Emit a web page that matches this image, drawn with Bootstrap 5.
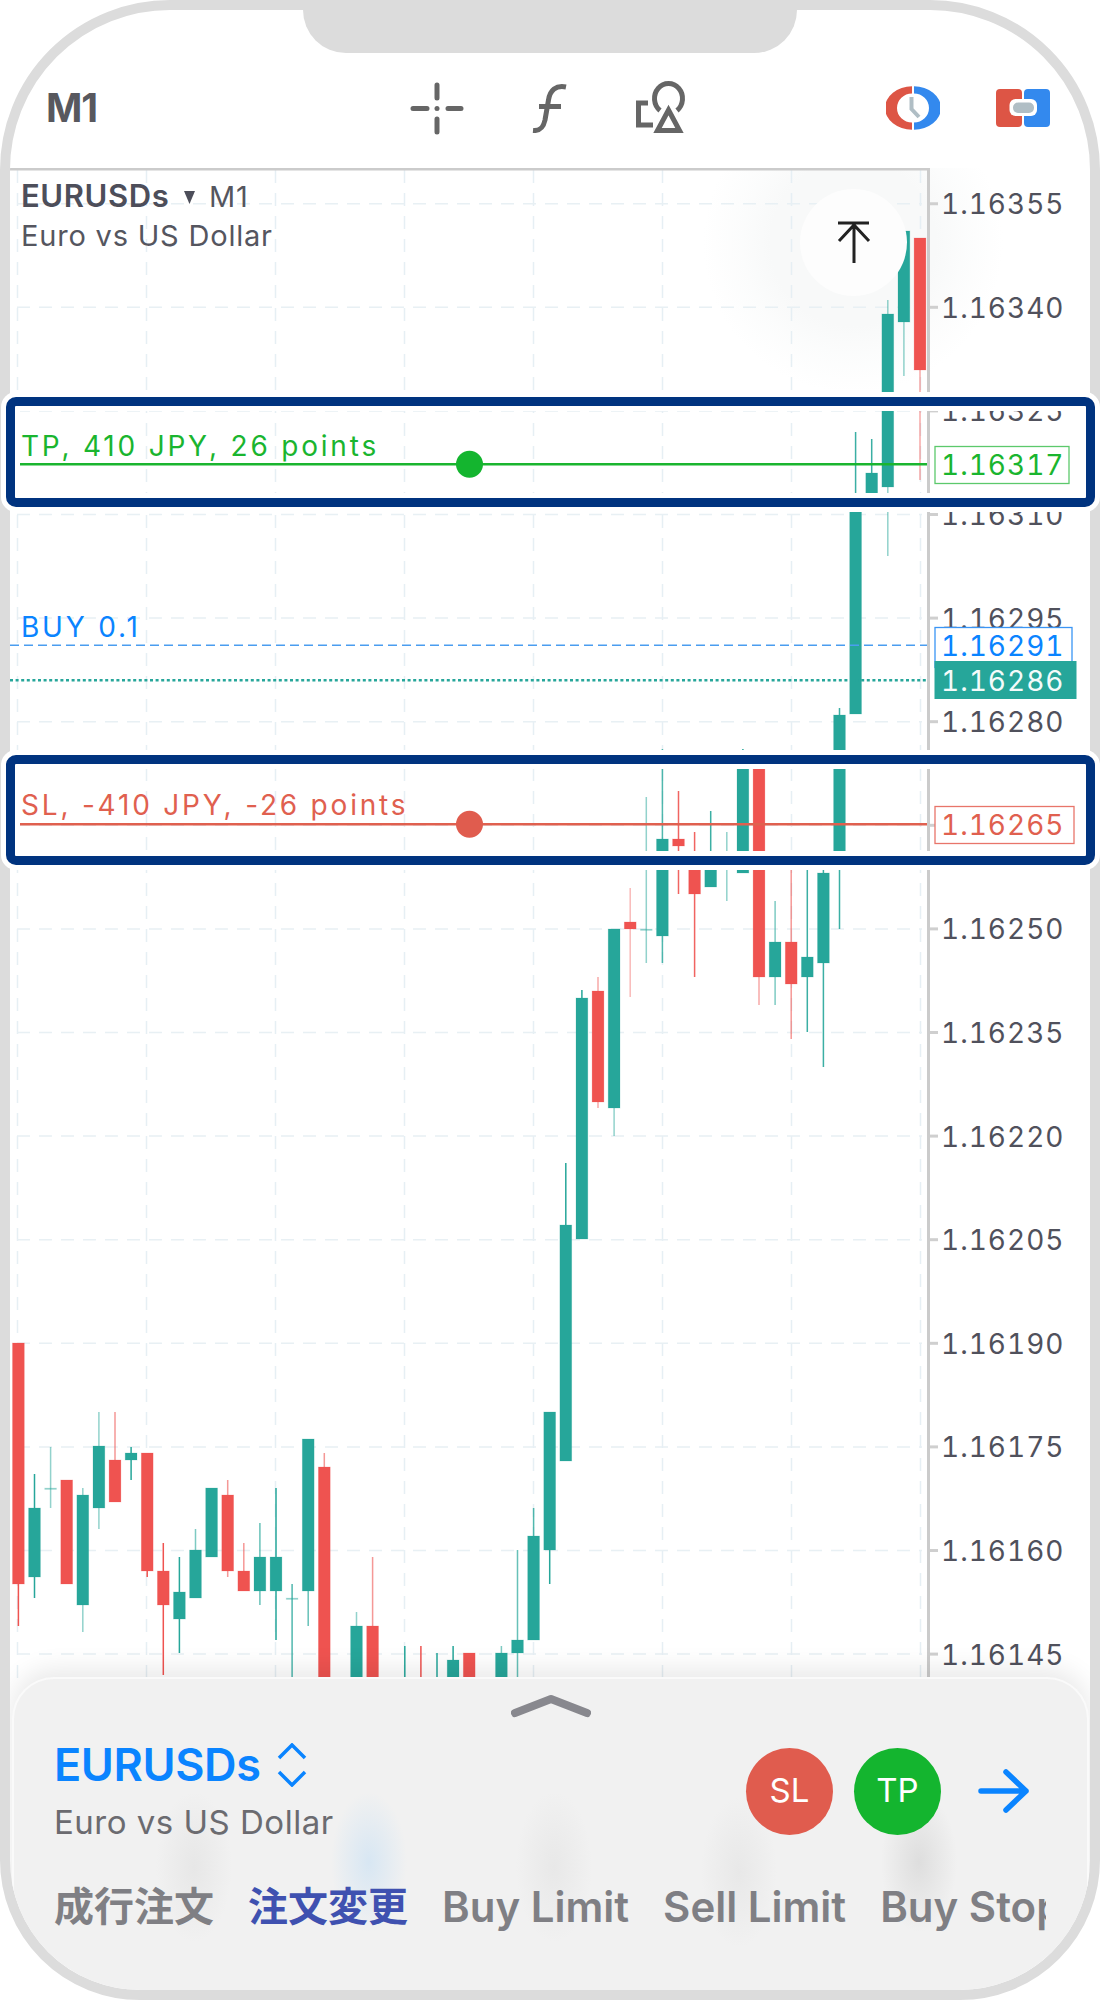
<!DOCTYPE html>
<html>
<head>
  <meta charset="utf-8">
  <meta name="viewport" content="width=device-width, initial-scale=1">
  <link href="https://cdn.jsdelivr.net/npm/bootstrap@5.3.3/dist/css/bootstrap.min.css" rel="stylesheet">
  <script src="https://cdn.jsdelivr.net/npm/bootstrap@5.3.3/dist/js/bootstrap.bundle.min.js"></script>
  <style>
    body { margin: 0; background: #fff; font-family: Inter, "Noto Sans CJK JP", sans-serif; }
    .phone-shell { width: 1100px; height: 2000px; }
    .phone-frame { width: 1100px; height: 2000px; border: 10px solid #dcdcdc; border-radius: 170px 170px 140px 140px; overflow: hidden; background: #fff; }
    .notch { width: 494px; height: 43px; background: #dcdcdc; border-radius: 0 0 48px 48px; z-index: 5; }
    .top-bar { height: 158px; padding: 38px 40px 0 36px; }
    .tf-label { width: 364px; font-size: 39px; font-weight: 700; color: #58585e; letter-spacing: -1px; }
    .tool-group { gap: 68px; }
    .side-group { gap: 56px; }
    .chart-area { height: 1822px; }
    .chart-svg { display: block; background: radial-gradient(circle 150px at 843px 75px, #f8f9f9 55%, rgba(250,251,251,.7) 75%, transparent); }
    .px-label { font: 400 28px Inter, sans-serif; font-variant-numeric: tabular-nums; letter-spacing: 1px; fill: #50515c; }
    .level-text { font: 400 28px Inter, sans-serif; letter-spacing: 2.8px; }
    .sym-bold { font: 600 31px Inter, sans-serif; fill: #4d4e5a; letter-spacing: .6px; }
    .sym-thin { font: 400 29px Inter, sans-serif; fill: #55565f; letter-spacing: .8px; }
    .hl-box { left: 6px; width: 1089px; height: 110px; border: 9px solid #00337f; border-radius: 10px; box-shadow: 0 0 0 5px #fff, inset 0 0 0 5px #fff; z-index: 6; }
    .hl-tp { top: 397px; }
    .hl-sl { top: 755px; }
    .top-btn { width: 107px; height: 107px; top: 21px; left: 790px; background: #fdfdfd; border: 0; padding: 0; }
    .top-btn:hover { background: #fdfdfd; }
    .order-panel { left: 2px; right: 1px; height: 313px; border: 2px solid #fafafa; border-bottom: 0; border-radius: 42px 42px 0 0; box-shadow: 0 -8px 26px rgba(0,0,0,.09);
      background:
        radial-gradient(ellipse 38px 75px at 180px 188px, rgba(205,205,205,.28), transparent),
        radial-gradient(ellipse 38px 70px at 355px 183px, rgba(190,220,245,.5), transparent),
        radial-gradient(ellipse 38px 75px at 540px 188px, rgba(205,205,205,.25), transparent),
        radial-gradient(ellipse 38px 75px at 725px 193px, rgba(205,205,205,.25), transparent),
        radial-gradient(ellipse 38px 70px at 905px 183px, rgba(195,195,195,.42), transparent),
        #f1f1f1; }
    .panel-grab { padding-top: 15px; }
    .panel-body { padding: 22px 0 0 40px; }
    .sym-name { font-size: 45px; line-height: 50px; font-weight: 600; color: #0a84ff; letter-spacing: -.4px; }
    .sym-desc { font-size: 33px; line-height: 40px; color: #6b6b70; margin-top: 12px; letter-spacing: .5px; }
    .round-act { width: 87px; height: 87px; font-size: 33px; color: #fff; }
    .act-sl { background: #e05c4e; }
    .act-tp { background: #14b52f; }
    .act-group { gap: 21px; padding-right: 57px; }
    .tab-strip { margin-top: 40px; gap: 34px; width: 992px; white-space: nowrap; font-size: 40px; line-height: 50px; font-weight: 600; color: #7f7f84; }
    .tab-latin { font-size: 42px; }
    .tab-now { color: #3f51b0; }
  </style>
</head>
<body>
  <div class="phone-shell position-relative">
    <div class="phone-frame position-relative d-flex flex-column">
      <div class="notch position-absolute top-0 start-50 translate-middle-x"></div>

      <div class="top-bar d-flex align-items-center">
        <div class="tf-label">M1</div>
        <div class="tool-group d-flex align-items-center">
          <svg width="54" height="53" viewBox="410 81 54 53" fill="none" stroke="#666" stroke-width="5" stroke-linecap="round">
            <path d="M437 84V97M437 118V131M413 107.5H427M448 107.5H461"/>
            <circle cx="437" cy="107.5" r="2.5" fill="#666" stroke="none"/>
          </svg>
          <svg width="35" height="49" viewBox="532 84 35 49" fill="none" stroke="#666" stroke-width="5">
            <path d="M566 87C556 85 550 90 548.5 100L545 120C543 129 539 131 533 130.5"/>
            <path d="M539 106.5H561"/>
          </svg>
          <svg width="51" height="54" viewBox="636 80 51 54" fill="none" stroke="#666" stroke-width="5">
            <path d="M649 102H639.5V124H654"/>
            <path d="M661 109.5A14 15 0 1 1 678 109.5"/>
            <path d="M669.5 109L680.5 129.5H658.5Z"/>
          </svg>
        </div>
        <div class="side-group d-flex align-items-center ms-auto">
          <svg width="54" height="44" viewBox="886 86 54 44">
            <path fill="#dd5545" d="M912 86.3A27 21.7 0 0 0 912 129.7V122.5A15 14.5 0 0 1 912 93.5Z"/>
            <path fill="#3389ee" d="M914 86.3A27 21.7 0 0 1 914 129.7V122.5A15 14.5 0 0 0 914 93.5Z"/>
            <path fill="none" stroke="#b0bec5" stroke-width="4" d="M911.5 97V109L919 117"/>
          </svg>
          <svg width="54" height="38" viewBox="996 89 54 38">
            <rect x="996" y="89" width="26" height="38" rx="4" fill="#dd5545"/>
            <rect x="1024" y="89" width="26" height="38" rx="4" fill="#3389ee"/>
            <rect x="1009.5" y="99" width="27.5" height="17" rx="6" fill="#fff"/>
            <rect x="1013" y="102.5" width="21" height="10.5" rx="5" fill="#b0bec5"/>
          </svg>
        </div>
      </div>

      <div class="chart-area position-relative">
        <svg id="chart" class="chart-svg" width="1080" height="1822" viewBox="10 168 1080 1822"></svg>

        <button class="top-btn btn rounded-circle position-absolute" type="button">
          <svg width="34" height="44" viewBox="836 221 34 44" fill="none" stroke="#222" stroke-width="3">
            <path d="M837 223H868M853 225V263M838 241L853 225L868 241"/>
          </svg>
        </button>

        <div class="order-panel position-absolute bottom-0">
          <div class="panel-grab d-flex justify-content-center">
            <svg width="80" height="24" viewBox="0 0 80 24" fill="none" stroke="#88888e" stroke-width="8" stroke-linecap="round" stroke-linejoin="round">
              <path d="M4 19L40 5L76 19"/>
            </svg>
          </div>
          <div class="panel-body">
            <div class="d-flex align-items-center justify-content-between">
              <div>
                <div class="sym-name d-flex align-items-center gap-3">
                  <span>EURUSDs</span>
                  <svg width="30" height="44" viewBox="0 0 30 44" fill="none" stroke="#0a84ff" stroke-width="3.5">
                    <path d="M2 15L15 2L28 15M2 29L15 42L28 29"/>
                  </svg>
                </div>
                <div class="sym-desc">Euro vs US Dollar</div>
              </div>
              <div class="act-group d-flex align-items-center">
                <div class="round-act act-sl rounded-circle d-flex align-items-center justify-content-center">SL</div>
                <div class="round-act act-tp rounded-circle d-flex align-items-center justify-content-center">TP</div>
                <svg class="ms-3" width="52" height="44" viewBox="0 0 52 44" fill="none" stroke="#0a84ff" stroke-width="5.5" stroke-linecap="round" stroke-linejoin="round">
                  <path d="M3 22H48M28 3L48 22L28 41"/>
                </svg>
              </div>
            </div>
            <div class="tab-strip d-flex overflow-hidden">
              <span class="flex-shrink-0">成行注文</span>
              <span class="flex-shrink-0 tab-now">注文変更</span>
              <span class="flex-shrink-0 tab-latin">Buy Limit</span>
              <span class="flex-shrink-0 tab-latin">Sell Limit</span>
              <span class="flex-shrink-0 tab-latin">Buy Stop</span>
            </div>
          </div>
        </div>
      </div>
    </div>

    <div class="hl-box hl-tp position-absolute"></div>
    <div class="hl-box hl-sl position-absolute"></div>
  </div>

  <script>
    var GREEN = "#26a69a", RED = "#ef5350";
    // i, colour, body top, body bottom, wick top, wick bottom, wick opacity
    var candles = [
      [0,RED,1343,1584,1343,1626,1],[1,GREEN,1508,1577,1474,1598,1],[2,GREEN,1488,1489,1447,1508,.5],
      [3,RED,1480,1584,1480,1584,1],[4,GREEN,1495,1605,1488,1632,.5],[5,GREEN,1446,1508,1412,1529,.5],
      [6,RED,1460,1502,1412,1502,.6],[7,GREEN,1453,1460,1447,1480,1],[8,RED,1453,1571,1453,1577,1],
      [9,RED,1571,1605,1543,1675,1],[10,GREEN,1592,1619,1557,1653,1],[11,GREEN,1550,1598,1529,1598,.6],
      [12,GREEN,1488,1557,1488,1557,1],[13,RED,1495,1571,1480,1577,.6],[14,RED,1571,1591,1543,1591,.6],
      [15,GREEN,1557,1591,1523,1605,.7],[16,GREEN,1557,1591,1488,1640,1],[17,GREEN,1598,1599,1584,1680,.8],
      [18,GREEN,1439,1591,1439,1626,.7],[19,RED,1467,1700,1453,1700,.6],[21,GREEN,1626,1700,1612,1700,.5],
      [22,RED,1626,1700,1557,1700,.6],[24,GREEN,1680,1700,1646,1700,1],[25,RED,1680,1700,1646,1700,1],
      [26,GREEN,1680,1700,1653,1700,1],[27,GREEN,1660,1700,1646,1700,1],[28,RED,1653,1700,1653,1700,1],
      [30,GREEN,1653,1700,1646,1700,.6],[31,GREEN,1640,1653,1550,1700,.7],[32,GREEN,1536,1640,1508,1536,.8],
      [33,GREEN,1412,1550,1412,1584,1],[34,GREEN,1225,1461,1163,1461,1],[35,GREEN,998,1239,990,1239,1],
      [36,RED,991,1102,977,1108,.5],[37,GREEN,929,1108,929,1136,.5],[38,RED,922,929,888,997,.4],
      [39,GREEN,929,930,797,963,.5],[40,GREEN,839,936,749,963,.8],[41,RED,839,846,791,894,.9],
      [42,RED,859,894,832,977,.9],[43,GREEN,859,887,811,887,.9],[44,GREEN,866,867,832,901,.5],
      [45,GREEN,766,873,749,873,1],[46,RED,766,977,766,1005,.5],[47,GREEN,942,977,901,1005,.6],
      [48,RED,942,984,866,1039,.6],[49,GREEN,957,977,866,1032,.9],[50,GREEN,873,963,866,1067,.9],
      [51,GREEN,715,859,708,929,.9],[52,GREEN,500,714,432,714,.9],[53,GREEN,473,500,439,500,.9],
      [54,GREEN,314,487,300,556,.5],[55,GREEN,231,322,231,376,.5],[56,RED,238,370,238,480,.5]
    ];
    var prices = ["1.16355","1.16340","1.16325","1.16310","1.16295","1.16280","1.16265","1.16250","1.16235","1.16220","1.16205","1.16190","1.16175","1.16160","1.16145"];

    var txt = "";
    // grid
    for (var g = 0; g < 8; g++) {
      var gx = 17.5 + 129 * g;
      txt += `<line x1="${gx}" x2="${gx}" y1="170" y2="1680" stroke="#e6eff4" stroke-width="1.5" stroke-dasharray="13 10"/>`;
    }
    for (var p = 0; p < prices.length; p++) {
      var py = 203.7 + 103.6 * p;
      txt += `<line x1="17" x2="922" y1="${py}" y2="${py}" stroke="#e8f0f4" stroke-width="1.5" stroke-dasharray="13 9"/>`;
      txt += `<line x1="928" x2="938" y1="${py}" y2="${py}" stroke="#cfcfcf" stroke-width="3"/>`;
      txt += `<text class="px-label" x="941" y="${py + 10.5}">${prices[p]}</text>`;
    }
    // frame of the chart
    txt += `<path d="M10 169H928.5V1680" fill="none" stroke="#cbcbcb" stroke-width="3"/>`;
    // candles
    for (var c = 0; c < candles.length; c++) {
      var k = candles[c], cx = 18.4 + 16.1 * k[0];
      txt += `<rect x="${cx - .75}" y="${k[4]}" width="1.5" height="${k[5] - k[4]}" fill="${k[1]}" opacity="${k[6]}"/>`;
      txt += `<rect x="${cx - 5.9}" y="${k[2]}" width="11.8" height="${Math.max(k[3] - k[2], 1.5)}" fill="${k[1]}" stroke="${k[1]}" stroke-opacity=".25" stroke-width=".8"${k[3] - k[2] < 2 ? ' opacity=".5"' : ''}/>`;
    }
    // order lines
    txt += `<text class="sym-bold" x="21" y="207">EURUSDs</text>`;
    txt += `<path d="M184 191H195L189.5 204Z" fill="#4d4e5a"/>`;
    txt += `<text class="sym-thin" x="209" y="207">M1</text>`;
    txt += `<text class="sym-thin" x="21" y="246">Euro vs US Dollar</text>`;

    txt += `<text class="level-text" x="21" y="456" fill="#1ab52f">TP, 410 JPY, 26 points</text>`;
    txt += `<line x1="20" x2="927" y1="464.3" y2="464.3" stroke="#1ab52f" stroke-width="2.4"/>`;
    txt += `<circle cx="469.5" cy="464.3" r="13.5" fill="#14b52f"/>`;
    txt += `<rect x="935" y="446.5" width="134" height="37" fill="#fff" stroke="#5cc96c" stroke-width="1.3"/>`;
    txt += `<text class="px-label" x="941" y="475" style="fill:#1ab52f">1.16317</text>`;

    txt += `<text class="level-text" x="21" y="637" fill="#0a84ff">BUY 0.1</text>`;
    txt += `<line x1="10" x2="927" y1="645.3" y2="645.3" stroke="#4a9df0" stroke-width="1.5" stroke-dasharray="9 5"/>`;
    txt += `<rect x="935" y="627.5" width="137" height="40" fill="#fff" stroke="#3a95f5" stroke-width="1.3"/>`;
    txt += `<text class="px-label" x="941" y="656" style="fill:#0a84ff">1.16291</text>`;

    txt += `<line x1="10" x2="927" y1="680.3" y2="680.3" stroke="#26a69a" stroke-width="2.6" stroke-dasharray="3 2.6"/>`;
    txt += `<rect x="934.5" y="661" width="142" height="38" fill="#26a69a"/>`;
    txt += `<text class="px-label" x="941" y="690.5" style="fill:#f4fbfa">1.16286</text>`;

    txt += `<text class="level-text" x="21" y="815" fill="#e0604f">SL, -410 JPY, -26 points</text>`;
    txt += `<line x1="20" x2="927" y1="824.3" y2="824.3" stroke="#e0604f" stroke-width="2.4"/>`;
    txt += `<circle cx="469.5" cy="824.3" r="13.5" fill="#e05c4e"/>`;
    txt += `<rect x="935" y="806.5" width="139" height="37" fill="#fff" stroke="#e8756a" stroke-width="1.3"/>`;
    txt += `<text class="px-label" x="941" y="835" style="fill:#e0604f">1.16265</text>`;

    document.getElementById("chart").innerHTML = txt;
  </script>
</body>
</html>
